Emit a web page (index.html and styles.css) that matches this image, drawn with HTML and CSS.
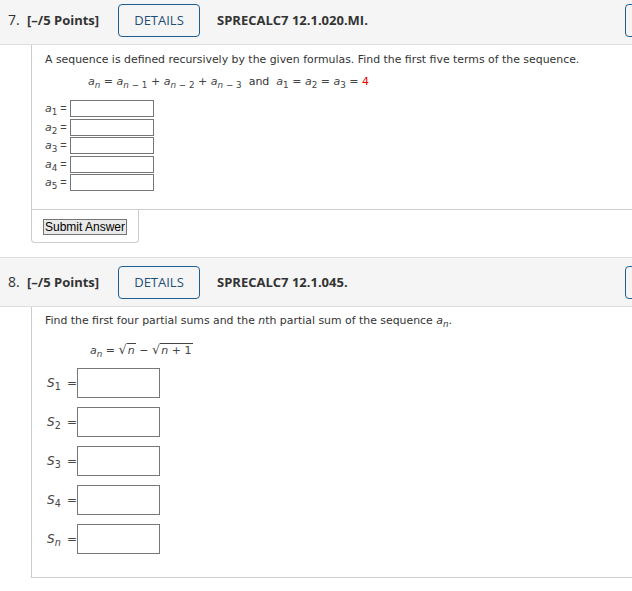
FILE: index.html
```html
<!DOCTYPE html>
<html>
<head>
<meta charset="utf-8">
<link rel="stylesheet" href="styles.css">
</head>
<body>
<div class="page">
  <section class="question q7">
    <header class="qhead">
      <span class="qnum">7.</span>
      <span class="pts">[–/5 Points]</span>
      <button class="details">DETAILS</button>
      <span class="code">SPRECALC7 12.1.020.MI.</span>
      <button class="notes" aria-label="My Notes"></button>
    </header>
    <div class="qbody">
      <p class="prompt">A sequence is defined recursively by the given formulas. Find the first five terms of the sequence.</p>
      <div class="formula f1"><i>a</i><sub><i>n</i></sub> = <i>a</i><sub><i>n</i> − 1</sub> + <i>a</i><sub><i>n</i> − 2</sub> + <i>a</i><sub><i>n</i> − 3</sub> &nbsp;<span class="up">and</span>&nbsp; <i>a</i><sub>1</sub> = <i>a</i><sub>2</sub> = <i>a</i><sub>3</sub> = <span class="red">4</span></div>
      <div class="alist">
        <div class="arow"><span class="albl"><i>a</i><sub>1</sub><span class="aeq">=</span></span><input class="ain" type="text"></div>
        <div class="arow"><span class="albl"><i>a</i><sub>2</sub><span class="aeq">=</span></span><input class="ain" type="text"></div>
        <div class="arow"><span class="albl"><i>a</i><sub>3</sub><span class="aeq">=</span></span><input class="ain" type="text"></div>
        <div class="arow"><span class="albl"><i>a</i><sub>4</sub><span class="aeq">=</span></span><input class="ain" type="text"></div>
        <div class="arow"><span class="albl"><i>a</i><sub>5</sub><span class="aeq">=</span></span><input class="ain" type="text"></div>
      </div>
    </div>
    <div class="submit"><button class="sbtn">Submit Answer</button></div>
  </section>

  <section class="question q8">
    <header class="qhead">
      <span class="qnum">8.</span>
      <span class="pts">[–/5 Points]</span>
      <button class="details">DETAILS</button>
      <span class="code">SPRECALC7 12.1.045.</span>
      <button class="notes" aria-label="My Notes"></button>
    </header>
    <div class="qbody qbody8">
      <p class="prompt">Find the first four partial sums and the <i>n</i>th partial sum of the sequence <i>a</i><sub><i>n</i></sub>.</p>
      <div class="formula f2"><i>a</i><sub><i>n</i></sub> = <span class="sqrt"><span class="rad">√</span><span class="over"><i>n</i></span></span> − <span class="sqrt"><span class="rad">√</span><span class="over"><i>n</i> + 1</span></span></div>
      <div class="slist">
        <div class="srow"><span class="slbl"><i>S</i><sub>1</sub></span><span class="seq">=</span><input class="sin" type="text"></div>
        <div class="srow"><span class="slbl"><i>S</i><sub>2</sub></span><span class="seq">=</span><input class="sin" type="text"></div>
        <div class="srow"><span class="slbl"><i>S</i><sub>3</sub></span><span class="seq">=</span><input class="sin" type="text"></div>
        <div class="srow"><span class="slbl"><i>S</i><sub>4</sub></span><span class="seq">=</span><input class="sin" type="text"></div>
        <div class="srow"><span class="slbl"><i>S</i><sub><i>n</i></sub></span><span class="seq">=</span><input class="sin" type="text"></div>
      </div>
    </div>
  </section>
</div>
</body>
</html>
```
FILE: styles.css
```css
html, body {
  margin: 0;
  padding: 0;
  overflow: hidden;
  background: #fff;
}
body {
  font-family: "DejaVu Sans", Verdana, sans-serif;
  color: #333;
}
.page {
  width: 740px;
  margin-top: -5px;
}
.question {
  margin-bottom: 14px;
}
.qhead {
  display: flex;
  align-items: center;
  height: 48px;
  background: #f5f5f5;
  border-top: 1px solid #ddd;
  border-bottom: 1px solid #ddd;
  padding: 0 15px 0 8px;
  font-family: "Open Sans", sans-serif;
  color: #333;
}
.qnum {
  font-size: 14px;
  width: 19px;
  position: relative;
  top: -1px;
}
.pts {
  font-size: 13px;
  font-weight: 700;
  width: 91px;
}
.details {
  font-family: "Open Sans", sans-serif;
  font-size: 13px;
  color: #1f4e79;
  background: transparent;
  border: 1px solid #1f5f92;
  border-radius: 4px;
  width: 82px;
  height: 33px;
  padding: 0;
  margin-right: 17px;
}
.code {
  font-size: 13px;
  font-weight: 700;
}
.notes {
  margin-left: auto;
  width: 100px;
  height: 33px;
  border: 1px solid #1f5f92;
  border-radius: 4px;
  background: transparent;
}
.qbody {
  margin-left: 31px;
  border-left: 1px solid #ccc;
  border-bottom: 1px solid #ccc;
  padding: 8px 0 18px 13px;
}
.prompt {
  margin: 0;
  font-size: 10.9px;
  line-height: 13px;
}
.formula {
  font-size: 11px;
  color: #444;
}
.formula i, .albl i, .slbl i, .prompt i {
  font-style: oblique;
}
sub {
  font-size: 80%;
  line-height: 0;
  vertical-align: -3px;
}
.up {
  color: #333;
}
.red {
  color: #e00;
}
.f1 {
  margin: 9px 0 0 43px;
  line-height: 14px;
}
.alist {
  margin-top: 11px;
  display: flex;
  flex-direction: column;
  gap: 1.5px;
}
.arow {
  display: flex;
  align-items: center;
  height: 17px;
}
.albl {
  font-size: 11px;
  color: #444;
  width: 25px;
  white-space: nowrap;
}
.aeq {
  font-family: "Liberation Sans", Arial, sans-serif;
  font-size: 11px;
  margin-left: 3px;
}
.ain {
  width: 84px;
  height: 17px;
  box-sizing: border-box;
  border: 1.5px solid #767676;
  margin: 0;
  padding: 0;
}
.submit {
  margin-left: 31px;
  width: 108px;
  height: 33px;
  border: 1px solid #ccc;
  border-top: none;
  border-radius: 0 0 4px 4px;
  box-sizing: border-box;
  display: flex;
  align-items: center;
  padding-left: 11px;
}
.sbtn {
  font-family: "Liberation Sans", Arial, sans-serif;
  font-size: 12px;
  color: #000;
  background: #e9e9e9;
  border: 1px solid #767676;
  width: 84px;
  height: 16px;
  padding: 0;
  margin-top: 1px;
}
.qbody8 {
  padding: 7px 0 23px 13px;
}
.f2 {
  margin: 14px 0 0 45px;
  line-height: 18px;
}
.sqrt {
  display: inline-block;
}
.rad {
  font-style: normal;
  font-size: 13px;
}
.over {
  border-top: 1px solid #444;
  padding: 0 1px;
}
.slist {
  margin-top: 8px;
  display: flex;
  flex-direction: column;
  gap: 9px;
}
.srow {
  display: flex;
  align-items: center;
  height: 30px;
}
.slbl {
  font-size: 12px;
  color: #444;
  width: 20px;
  padding-left: 2px;
  white-space: nowrap;
}
.seq {
  font-size: 12px;
  color: #444;
  width: 10px;
}
.sin {
  width: 83px;
  height: 30px;
  box-sizing: border-box;
  border: 1px solid #777;
  margin: 0;
  padding: 0;
}
```
